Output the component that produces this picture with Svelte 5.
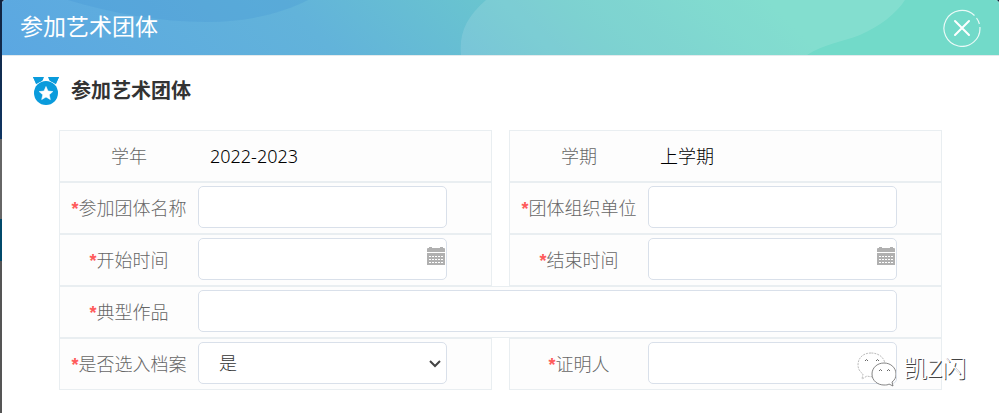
<script lang="ts">
	type Field = {
		id: string;
		label: string;
		kind: 'static' | 'text' | 'date' | 'select';
		required?: boolean;
		wide?: boolean;
		value?: string;
	};

	const title = '参加艺术团体';

	const fields: Field[] = [
		{ id: 'year', label: '学年', kind: 'static', value: '2022-2023' },
		{ id: 'term', label: '学期', kind: 'static', value: '上学期' },
		{ id: 'group-name', label: '参加团体名称', kind: 'text', required: true },
		{ id: 'group-org', label: '团体组织单位', kind: 'text', required: true },
		{ id: 'start', label: '开始时间', kind: 'date', required: true },
		{ id: 'end', label: '结束时间', kind: 'date', required: true },
		{ id: 'works', label: '典型作品', kind: 'text', required: true, wide: true },
		{ id: 'archive', label: '是否选入档案', kind: 'select', required: true },
		{ id: 'witness', label: '证明人', kind: 'text', required: true }
	];

	let archive = $state('是');
</script>

<div class="page">
	<div class="dialog" role="dialog" aria-label={title}>
		<header>
			<svg class="waves" viewBox="0 0 997 55" preserveAspectRatio="none" aria-hidden="true">
				<path d="M66 0C110 13 158 22 205 22C250 22 285 11 306 0Z" fill="#3c8fd0" opacity="0.22" />
				<path d="M484 0C464 17 457 34 459 55H805C822 44 840 42 858 35C878 26 894 14 903 0Z" fill="#fff" opacity="0.12" />
			</svg>
			<h1>{title}</h1>
			<button class="close" type="button" aria-label="关闭">
				<svg viewBox="0 0 38 38" fill="none" stroke="#fff" aria-hidden="true">
					<path d="M31.5 6.5A18 18 0 1 0 36.9 18M33.5 9A18 18 0 0 1 36.4 15" stroke-width="1.2" opacity="0.85" />
					<path d="M12 12L26 26M26 12L12 26" stroke-width="2" stroke-linecap="round" />
				</svg>
			</button>
		</header>

		<main>
			<h2>
				<svg class="medal" viewBox="0 0 26 28" aria-hidden="true">
					<path d="M0 0H11L9 5L4 8ZM15 0H26L22 8L17 5Z" fill="#0a9bdc" />
					<circle cx="13" cy="16" r="13" fill="#fff" />
					<circle cx="13" cy="16" r="12" fill="#0a9bdc" />
					<path d="M0 0H10L9 4L3 7ZM16 0H26L23 7L17 4Z" fill="#0a9bdc" />
					<path d="M13 9.500L15 14.100L19.800 14.600L16.200 17.800L17.300 22.500L13 20L8.700 22.500L9.800 17.800L6.200 14.600L11 14.100Z" fill="#fff" stroke="#fff" stroke-width="0.6" />
				</svg>
				{title}
			</h2>

			<form>
				{#each fields as f (f.id)}
					<div class="row" class:wide={f.wide}>
						{#if f.kind === 'static'}
							<span class="label">{f.label}</span>
							<span class="value">{f.value}</span>
						{:else}
							<label class="label" for={f.id}>
								{#if f.required}<span class="star">*</span>{/if}{f.label}
							</label>
							<div class="control">
								{#if f.kind === 'select'}
									<select id={f.id} bind:value={archive}>
										<option>是</option>
										<option>否</option>
									</select>
									<svg class="chevron" viewBox="0 0 12 8" aria-hidden="true">
										<path d="M1 1L6 6L11 1" fill="none" stroke="#444" stroke-width="2" />
									</svg>
								{:else}
									<input id={f.id} type="text" />
								{/if}
								{#if f.kind === 'date'}
									<svg class="calendar" viewBox="0 0 18 18" aria-hidden="true">
										<path d="M0 2Q0 1 1 1H2V0H5V1H13V0H16V1H17Q18 1 18 2V5H0ZM0 6H18V18H0Z" fill="#b0b0b0" />
										<path d="M2 9.500H17M2 12.500H17M2 15.500H17" stroke="#fff" stroke-dasharray="2 1" />
									</svg>
								{/if}
							</div>
						{/if}
					</div>
				{/each}
			</form>
		</main>
	</div>

	<div class="watermark">
		<svg viewBox="0 0 40 36" fill="#fff" stroke="#666" aria-hidden="true">
			<path d="M15 2C7 2 2 7 2 14C2 18 4 21 7 23L6 28L11 25C21 28 29 22 29 14C29 7 23 2 15 2Z" stroke="#bbb" stroke-dasharray="2 1" />
			<path d="M28 12C21 12 16 17 16 23C16 30 22 34 28 34C30 34 32 34 33 33L37 35L36 31C39 29 40 26 40 23C40 17 35 12 28 12Z" stroke-width="0.8" />
			<path d="M9 10Q10.500 7 12 10M20 10Q21.500 7 23 10M23 20Q24.500 17 26 20M31 20Q32.500 17 34 20" fill="none" />
		</svg>
		<span>凯Z闪</span>
	</div>
</div>

<style>
	:global(body) {
		background: #fff;
	}
	.page {
		position: relative;
		min-height: 100vh;
		box-sizing: border-box;
		padding-left: 2px;
		background: linear-gradient(#12233f, #0f3562 139px, #666 139px 219px, #014a6b 219px 261px, #555 261px);
		font-family: 'Liberation Sans', 'Noto Sans CJK SC', sans-serif;
		font-size: 18px;
	}
	.dialog {
		min-height: 100vh;
		background: #fff;
		border-radius: 4px 4px 0 0;
		overflow: hidden;
	}
	header {
		position: relative;
		display: flex;
		align-items: center;
		justify-content: space-between;
		height: 55px;
		padding: 0 18px;
		border-bottom: 1px solid #e4eaec;
		background: linear-gradient(45deg, #5ba7e2, #62b3da 32%, #6ccbcb 58%, #72dac9 78%);
	}
	.waves {
		position: absolute;
		inset: 0;
		width: 100%;
		height: 100%;
	}
	h1 {
		position: relative;
		margin: 0;
		padding-bottom: 2px;
		font-size: 23px;
		font-weight: 400;
		line-height: 32px;
		color: #fff;
	}
	.close {
		position: relative;
		width: 38px;
		height: 38px;
		padding: 0;
		border: 0;
		background: none;
		cursor: pointer;
	}
	.close svg {
		display: block;
	}
	main {
		padding: 20px 57px 22px;
	}
	h2 {
		display: flex;
		align-items: center;
		gap: 12px;
		margin: 0 0 24px -26px;
		font-size: 20px;
		font-weight: 700;
		line-height: 30px;
		color: #333;
	}
	.medal {
		width: 26px;
		height: 28px;
	}
	form {
		display: grid;
		grid-template-columns: 1fr 1fr;
		column-gap: 17px;
	}
	.row {
		display: flex;
		box-sizing: border-box;
		height: 52px;
		border: 1px solid #e9eef1;
		background: #fdfdfd;
	}
	.wide {
		grid-column: 1 / -1;
	}
	.label {
		flex: 0 0 138px;
		line-height: 52px;
		text-align: center;
		font-weight: 300;
		color: #666;
	}
	.star {
		font-weight: 700;
		color: #ff5a5a;
	}
	.value {
		padding-left: 12px;
		line-height: 50px;
		font-family: 'Noto Sans', 'Noto Sans CJK SC', sans-serif;
		font-weight: 300;
		color: #000;
	}
	.control {
		position: relative;
		flex: 1;
		height: 42px;
		margin: 3px 44px 0 0;
	}
	input,
	select {
		display: block;
		box-sizing: border-box;
		width: 100%;
		height: 42px;
		border: 1px solid #d9e0ea;
		border-radius: 5px;
		background: #fff;
		padding: 0 20px;
		font: inherit;
		font-weight: 300;
		color: #333;
	}
	select {
		appearance: none;
		padding-top: 2px;
	}
	.chevron {
		position: absolute;
		top: 18px;
		right: 6px;
		width: 12px;
		height: 8px;
		pointer-events: none;
	}
	.calendar {
		position: absolute;
		top: 9px;
		right: 2px;
		width: 18px;
		height: 18px;
	}
	.watermark {
		position: absolute;
		right: 33px;
		bottom: 26px;
		display: flex;
		align-items: center;
		gap: 7px;
		font-size: 24px;
		line-height: 36px;
		font-weight: 300;
		color: #fff;
		text-shadow: 1px 1px 0 #444;
	}
	.watermark svg {
		width: 40px;
		height: 36px;
	}
</style>
